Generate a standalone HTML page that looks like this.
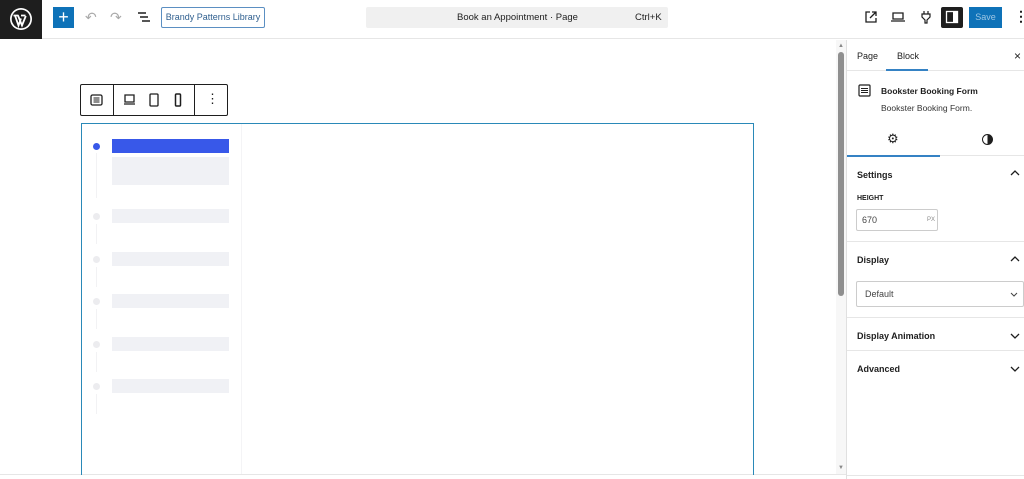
<!DOCTYPE html>
<html><head><meta charset="utf-8"><style>
*{box-sizing:border-box;margin:0;padding:0}
body{width:1024px;height:479px;overflow:hidden;background:#fff;font-family:"Liberation Sans",sans-serif;color:#1e1e1e;position:relative}
.a{position:absolute}
.t{font-size:9px}
.b{font-weight:bold}
.sk{position:absolute;left:112px;width:117px;background:#f0f1f5}
.dot{position:absolute;left:93px;width:7px;height:7px;border-radius:50%;background:#ececef}
.vl{position:absolute;left:96px;width:1px;background:#f2f2f4}
</style></head><body>
<div class="a" style="left:0;top:0;width:1024px;height:39px;border-bottom:1px solid #e6e6e6"></div>
<div class="a" style="left:0;top:0;width:42px;height:39px;background:#1e1e1e"></div>
<svg class="a" style="left:9px;top:7px" width="24" height="24" viewBox="0 0 24 24"><circle cx="12" cy="12" r="11" fill="#fff"/><circle cx="12" cy="12" r="9.3" fill="#1e1e1e"/><path d="M4.5 8.5h5M6 8.5l3.5 10 2.5-7M9 8.5l4 10 3.8-9.5M12 8.5h4.5" stroke="#fff" stroke-width="1.8" fill="none"/></svg>
<div class="a" style="left:53px;top:7px;width:21px;height:21px;background:#0e72b8;color:#fff;font-size:18px;line-height:20px;text-align:center">+</div>
<div class="a" style="left:85px;top:9px;color:#aaa;font-size:14px">↶</div>
<div class="a" style="left:110px;top:9px;color:#aaa;font-size:14px">↷</div>
<svg class="a" style="left:137px;top:11px" width="14" height="12"><path d="M1 2h8M3 6h8M5 10h8" stroke="#1e1e1e" stroke-width="1.5"/></svg>
<div class="a t" style="left:161px;top:7px;width:104px;height:21px;border:1px solid #5b8fc2;border-radius:2px;color:#2f5f8f;line-height:19px;text-align:center">Brandy Patterns Library</div>
<div class="a t" style="left:366px;top:7px;width:302px;height:21px;background:#f0f0f0;border-radius:2px;line-height:21px;font-size:9.5px"><span class="a" style="left:91px">Book an Appointment · Page</span><span class="a" style="left:269px">Ctrl+K</span></div>
<svg class="a" style="left:864px;top:10px" width="14" height="14"><path d="M6 2H2v10h10V8M8 2h4v4M12 2L6 8" stroke="#1e1e1e" stroke-width="1.3" fill="none"/></svg>
<svg class="a" style="left:891px;top:11px" width="14" height="12"><path d="M2 2h10v6H2zM0 10h14" stroke="#1e1e1e" stroke-width="1.3" fill="none"/></svg>
<svg class="a" style="left:920px;top:10px" width="12" height="14"><path d="M4 1v3M8 1v3M2 4h8v3l-3 3v3H5v-3L2 7z" stroke="#1e1e1e" stroke-width="1.2" fill="none"/></svg>
<div class="a" style="left:941px;top:7px;width:22px;height:21px;background:#1e1e1e;border-radius:2px"></div>
<svg class="a" style="left:945px;top:10px" width="14" height="14"><rect x="1.5" y="1.5" width="11" height="11" fill="none" stroke="#fff" stroke-width="1.3"/><rect x="8" y="2" width="4" height="10" fill="#fff"/></svg>
<div class="a t" style="left:969px;top:7px;width:33px;height:21px;background:#0e72b8;color:#9cc6e4;line-height:21px;text-align:center">Save</div>
<div class="a" style="left:1014px;top:9px;font-size:14px;line-height:14px;font-weight:bold">⋮</div>
<div class="a" style="left:0;top:474px;width:846px;height:1px;background:#e6e6e6"></div>
<div class="a" style="left:836px;top:40px;width:10px;height:434px;background:#f7f7f7"></div>
<div class="a" style="left:838px;top:52px;width:6px;height:244px;background:#8f8f8f;border-radius:3px"></div>
<div class="a" style="left:838px;top:43px;font-size:6px;color:#888">▲</div>
<div class="a" style="left:838px;top:465px;font-size:6px;color:#888">▼</div>
<div class="a" style="left:80px;top:84px;width:148px;height:32px;border:1px solid #1e1e1e;border-radius:2px;background:#fff"></div>
<div class="a" style="left:113px;top:85px;width:1px;height:30px;background:#1e1e1e"></div>
<div class="a" style="left:194px;top:85px;width:1px;height:30px;background:#1e1e1e"></div>
<svg class="a" style="left:90px;top:94px" width="13" height="12"><rect x="1" y="1" width="11" height="10" rx="1.5" fill="none" stroke="#1e1e1e" stroke-width="1.3"/><path d="M3.5 4h6M3.5 6h6M3.5 8h6" stroke="#1e1e1e"/></svg>
<svg class="a" style="left:123px;top:94px" width="13" height="12"><path d="M2 1h9v7H2zM1 10h11" stroke="#1e1e1e" stroke-width="1.3" fill="none"/></svg>
<svg class="a" style="left:149px;top:93px" width="10" height="14"><rect x="1" y="1" width="8" height="12" rx="1" fill="none" stroke="#1e1e1e" stroke-width="1.3"/></svg>
<svg class="a" style="left:174px;top:93px" width="8" height="14"><rect x="1.5" y="1" width="5" height="12" rx="1" fill="none" stroke="#1e1e1e" stroke-width="1.5"/></svg>
<div class="a" style="left:206px;top:92px;font-size:13px;line-height:14px">⋮</div>
<div class="a" style="left:81px;top:123px;width:673px;height:352px;border:1px solid #2a89b8;border-bottom:none"></div>
<div class="a" style="left:241px;top:124px;width:1px;height:350px;background:#f4f4f6"></div>
<div class="a" style="left:93px;top:143px;width:7px;height:7px;border-radius:50%;background:#3858e9"></div>
<div class="a" style="left:112px;top:139px;width:117px;height:14px;background:#3858e9"></div>
<div class="sk" style="top:157px;height:28px"></div>
<div class="vl" style="top:153px;height:45px"></div>
<div class="dot" style="top:213px"></div><div class="sk" style="top:209px;height:14px"></div><div class="vl" style="top:224px;height:20px"></div>
<div class="dot" style="top:256px"></div><div class="sk" style="top:252px;height:14px"></div><div class="vl" style="top:267px;height:20px"></div>
<div class="dot" style="top:298px"></div><div class="sk" style="top:294px;height:14px"></div><div class="vl" style="top:309px;height:20px"></div>
<div class="dot" style="top:341px"></div><div class="sk" style="top:337px;height:14px"></div><div class="vl" style="top:352px;height:20px"></div>
<div class="dot" style="top:383px"></div><div class="sk" style="top:379px;height:14px"></div><div class="vl" style="top:394px;height:20px"></div>
<div class="a" style="left:846px;top:40px;width:1px;height:439px;background:#e0e0e0"></div>
<div class="a" style="left:847px;top:70px;width:177px;height:1px;background:#e6e6e6"></div>
<div class="a t" style="left:857px;top:51px">Page</div>
<div class="a t" style="left:897px;top:51px">Block</div>
<div class="a" style="left:886px;top:69px;width:42px;height:2px;background:#3582c4"></div>
<div class="a" style="left:1014px;top:49px;font-size:12px">×</div>
<svg class="a" style="left:858px;top:84px" width="13" height="13"><rect x="1" y="1" width="11" height="11" rx="1" fill="none" stroke="#1e1e1e" stroke-width="1.2"/><path d="M3 4.5h7M3 6.5h7M3 8.5h7" stroke="#1e1e1e"/></svg>
<div class="a t b" style="left:881px;top:86px;font-size:8.5px">Bookster Booking Form</div>
<div class="a t" style="left:881px;top:103px;font-size:8.5px;color:#333">Bookster Booking Form.</div>
<div class="a" style="left:887px;top:132px;font-size:13px;line-height:14px">⚙</div>
<div class="a" style="left:982px;top:134px;width:11px;height:11px;border-radius:50%;border:1.5px solid #1e1e1e;background:linear-gradient(90deg,#fff 50%,#1e1e1e 50%)"></div>
<div class="a" style="left:847px;top:155px;width:177px;height:1px;background:#e6e6e6"></div>
<div class="a" style="left:847px;top:155px;width:93px;height:2px;background:#3582c4"></div>
<div class="a t b" style="left:857px;top:170px">Settings</div>
<svg class="a" style="left:1010px;top:170px" width="10" height="6"><path d="M1 5l4-4 4 4" stroke="#1e1e1e" stroke-width="1.3" fill="none"/></svg>
<div class="a b" style="left:857px;top:195px;font-size:7px">HEIGHT</div>
<div class="a t" style="left:856px;top:209px;width:82px;height:22px;border:1px solid #ccc;border-radius:2px;line-height:20px;padding-left:5px;color:#444">670<span class="a" style="left:70px;font-size:6px;color:#888">PX</span></div>
<div class="a" style="left:847px;top:241px;width:177px;height:1px;background:#e6e6e6"></div>
<div class="a t b" style="left:857px;top:255px">Display</div>
<svg class="a" style="left:1010px;top:256px" width="10" height="6"><path d="M1 5l4-4 4 4" stroke="#1e1e1e" stroke-width="1.3" fill="none"/></svg>
<div class="a t" style="left:856px;top:281px;width:168px;height:26px;border:1px solid #ccc;border-radius:2px;line-height:25px;padding-left:8px;color:#444">Default</div>
<svg class="a" style="left:1010px;top:292px" width="8" height="5"><path d="M1 1l3 3 3-3" stroke="#444" stroke-width="1" fill="none"/></svg>
<div class="a" style="left:847px;top:317px;width:177px;height:1px;background:#e6e6e6"></div>
<div class="a t b" style="left:857px;top:331px">Display Animation</div>
<svg class="a" style="left:1010px;top:333px" width="10" height="6"><path d="M1 1l4 4 4-4" stroke="#1e1e1e" stroke-width="1.3" fill="none"/></svg>
<div class="a" style="left:847px;top:350px;width:177px;height:1px;background:#e6e6e6"></div>
<div class="a t b" style="left:857px;top:364px">Advanced</div>
<svg class="a" style="left:1010px;top:366px" width="10" height="6"><path d="M1 1l4 4 4-4" stroke="#1e1e1e" stroke-width="1.3" fill="none"/></svg>
<div class="a" style="left:847px;top:475px;width:177px;height:1px;background:#e6e6e6"></div>
</body></html>
